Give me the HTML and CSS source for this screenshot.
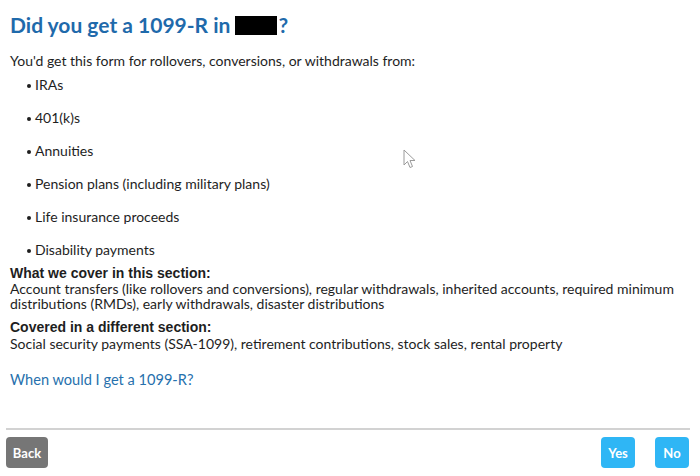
FILE: index.html
```html
<!DOCTYPE html>
<html lang="en">
<head>
<meta charset="utf-8">
<title>1099-R</title>
<link rel="stylesheet" href="styles.css">
</head>
<body>
<main class="page">
  <h1 class="title">Did you get a 1099-R in <span class="redact"></span>?</h1>
  <p class="intro">You'd get this form for rollovers, conversions, or withdrawals from:</p>
  <ul class="bullets">
    <li>IRAs</li>
    <li>401(k)s</li>
    <li>Annuities</li>
    <li>Pension plans (including military plans)</li>
    <li>Life insurance proceeds</li>
    <li>Disability payments</li>
  </ul>
  <section class="info">
    <h2 class="info-head">What we cover in this section:</h2>
    <p class="info-text">Account transfers (like rollovers and conversions), regular withdrawals, inherited accounts, required minimum distributions (RMDs), early withdrawals, disaster distributions</p>
  </section>
  <section class="info info-second">
    <h2 class="info-head">Covered in a different section:</h2>
    <p class="info-text">Social security payments (SSA-1099), retirement contributions, stock sales, rental property</p>
  </section>
  <a class="help-link" href="#">When would I get a 1099-R?</a>
</main>
<footer class="footer">
  <button class="btn btn-back">Back</button>
  <div class="answer">
    <button class="btn btn-blue">Yes</button>
    <button class="btn btn-blue">No</button>
  </div>
</footer>
<svg class="cursor" width="14" height="22" viewBox="0 0 14 22"><path d="M1 1 L1 16 L4.5 12.5 L7 18.5 L9.5 17.5 L7 11.5 L12 11.5 Z" fill="#fff" stroke="#9a9a9a" stroke-width="1"/></svg>
</body>
</html>
```
FILE: styles.css
```css
html, body {
  margin: 0;
  padding: 0;
  background: #fff;
}
body {
  font-family: Lato, "Open Sans", sans-serif;
  color: #1e1e1e;
  width: 700px;
  height: 476px;
  position: relative;
  overflow: hidden;
}
.page {
  padding: 12px 10px 0 10px;
}
.title {
  margin: 0;
  font-size: 21px;
  line-height: 26px;
  font-weight: 700;
  color: #1f6aab;
  display: flex;
  align-items: center;
}
.redact {
  display: inline-block;
  width: 42px;
  height: 19px;
  background: #000;
  margin: 1px 1px 0 5px;
}
.intro {
  margin: 14px 0 0 0;
  font-size: 14px;
  line-height: 18px;
}
.bullets {
  list-style: none;
  margin: 6px 0 0 0;
  padding: 0 0 0 17px;
}
.bullets li {
  font-size: 14px;
  line-height: 18px;
  margin-bottom: 15px;
  display: flex;
  align-items: center;
}
.bullets li:last-child {
  margin-bottom: 0;
}
.bullets li::before {
  content: "";
  width: 4px;
  height: 4px;
  border-radius: 50%;
  background: #1e1e1e;
  margin-right: 4px;
  margin-top: 1px;
  flex: none;
}
.info {
  margin-top: 7px;
  font-size: 14px;
  line-height: 15px;
}
.info-second {
  margin-top: 9px;
}
.info-head {
  margin: 0;
  font-family: "Liberation Sans", Arial, sans-serif;
  font-size: 14px;
  line-height: 15px;
  font-weight: 700;
}
.info-text {
  margin: 0;
  line-height: 15px;
}
.info-second .info-text {
  margin-top: 1px;
}
.help-link {
  display: block;
  margin-top: 20px;
  font-size: 14.6px;
  line-height: 18px;
  color: #2771ad;
  text-decoration: none;
}
.footer {
  position: absolute;
  left: 6px;
  right: 10px;
  top: 428px;
  border-top: 2px solid #d2d2d2;
  padding-top: 7px;
  display: flex;
  justify-content: space-between;
}
.answer {
  display: flex;
  gap: 20px;
  padding-right: 1px;
}
.btn {
  font-family: Lato, sans-serif;
  font-weight: 700;
  font-size: 13px;
  color: #fff;
  border: none;
  border-radius: 4px;
  height: 31px;
  padding: 0;
  cursor: pointer;
}
.btn-back {
  background: #767676;
  width: 42px;
}
.btn-blue {
  background: #2fb6f5;
  width: 34px;
}
.cursor {
  position: absolute;
  left: 403px;
  top: 149px;
}
```
